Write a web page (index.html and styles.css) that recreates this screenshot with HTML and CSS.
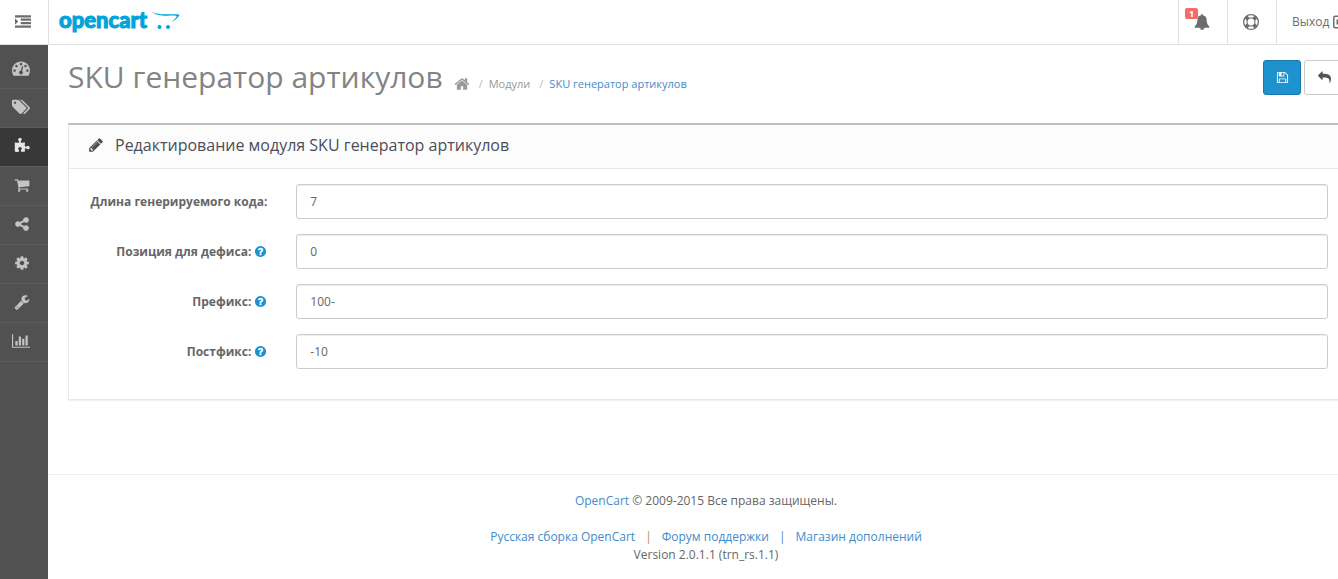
FILE: index.html
```html
<!DOCTYPE html>
<html lang="ru">
<head>
<meta charset="utf-8">
<title>SKU генератор артикулов</title>
<link rel="stylesheet" href="styles.css">
</head>
<body>
<svg class="sprite" aria-hidden="true">
  <symbol id="help" viewBox="0 0 1792 1792"><path d="M1024 1376v-192q0-14-9-23t-23-9h-192q-14 0-23 9t-9 23v192q0 14 9 23t23 9h192q14 0 23-9t9-23zm256-672q0-88-55.5-163t-138.5-116-170-41q-243 0-371 213-15 24 8 42l132 100q7 6 19 6 16 0 25-12 53-68 86-92 34-24 86-24 48 0 85.5 26t37.5 59q0 38-20 61t-68 45q-63 28-115.5 86.5t-52.5 125.5v36q0 14 9 23t23 9h192q14 0 23-9t9-23q0-19 21.5-49.5t54.5-49.5q32-18 49-28.5t46-35 44.5-48 28-60.5 12.5-81zm384 192q0 209-103 385.5t-279.5 279.5-385.5 103-385.5-103-279.5-279.5-103-385.5 103-385.5 279.5-279.5 385.5-103 385.5 103 279.5 279.5 103 385.5z"/></symbol>
</svg>
<div class="page">
  <header class="topbar">
    <button class="menu-toggle" type="button" aria-label="Меню"><svg class="icon icon-md" viewBox="0 0 1792 1792"><path d="M352 832q0 14-9 23l-288 288q-9 9-23 9-13 0-22.500-9.500t-9.500-22.500v-576q0-13 9.500-22.500t22.500-9.500q14 0 23 9l288 288q9 9 9 23zM32 1280h1728q32 0 32 32v192q0 32-32 32h-1728q-32 0-32-32v-192q0-32 32-32zM672 896h1088q32 0 32 32v192q0 32-32 32h-1088q-32 0-32-32v-192q0-32 32-32zM672 512h1088q32 0 32 32v192q0 32-32 32h-1088q-32 0-32-32v-192q0-32 32-32zM32 128h1728q32 0 32 32v192q0 32-32 32h-1728q-32 0-32-32v-192q0-32 32-32z"/></svg></button>
    <a class="logo" href="#"><span class="logo-text">opencart</span><svg class="logo-cart" viewBox="0 0 28 20"><path d="M0 1.500C3 4 8 4.200 14 4.200C20 4.200 25 4 27.500 4.600C27 7.500 23 10 19.500 12.500C22 9.500 24.500 7.500 24.800 6C21 5.200 16 6 10 5.400C5 5 1.500 4 0 1.500Z"/><circle cx="7.500" cy="17" r="2"/><circle cx="16" cy="17" r="2"/></svg></a>
    <nav class="top-links">
      <a class="top-link bell" href="#" aria-label="Уведомления"><span class="badge">1</span><svg class="icon icon-md" viewBox="0 0 1792 1792"><path d="M912 1696q0-16-16-16-59 0-101.500-42.500t-42.500-101.500q0-16-16-16t-16 16q0 73 51.500 124.500t124.500 51.500q16 0 16-16zm816-288q0 52-38 90t-90 38h-448q0 106-75 181t-181 75-181-75-75-181h-448q-52 0-90-38t-38-90q50-42 91-88t85-119.500 74.500-158.500 50-206 19.500-260q0-152 117-282.500t307-158.500q-8-19-8-39 0-40 28-68t68-28 68 28 28 68q0 20-8 39 190 28 307 158.500t117 282.500q0 139 19.500 260t50 206 74.500 158.500 85 119.500 91 88z"/></svg></a>
      <a class="top-link" href="#" aria-label="Помощь"><svg class="icon icon-md" viewBox="0 0 16 16"><path fill-rule="evenodd" d="M8 0a8 8 0 1 1 0 16A8 8 0 0 1 8 0ZM8 1.200a6.800 6.800 0 0 0-3.300.9L6.400 3.800a4.600 4.600 0 0 1 3.200 0l1.700-1.700A6.800 6.800 0 0 0 8 1.200ZM2.100 4.700a6.800 6.800 0 0 0 0 6.600l1.700-1.700a4.600 4.600 0 0 1 0-3.200ZM13.900 4.700l-1.700 1.700a4.600 4.600 0 0 1 0 3.200l1.700 1.700a6.800 6.800 0 0 0 0-6.600ZM4.700 13.900a6.800 6.800 0 0 0 6.600 0l-1.700-1.700a4.600 4.600 0 0 1-3.200 0ZM8 4.600a3.400 3.400 0 1 0 0 6.800 3.400 3.400 0 0 0 0-6.800Z"/></svg></a>
      <a class="top-link logout" href="#">Выход <svg class="icon icon-md" viewBox="0 0 16 16"><path d="M6 1.500H3.500A2.500 2.500 0 0 0 1 4v8a2.500 2.500 0 0 0 2.500 2.500H6V13H3.500a1 1 0 0 1-1-1V4a1 1 0 0 1 1-1H6ZM4.500 5.500H9v-3L15 8l-6 5.500v-3H4.500Z"/></svg></a>
    </nav>
  </header>
  <div class="layout">
    <nav class="sidebar" aria-label="Разделы">
      <a class="side-link" href="#" aria-label="Панель"><svg class="icon icon-lg" viewBox="0 0 1792 1792"><path d="M384 1152q0-53-37.500-90.500t-90.500-37.500-90.500 37.500-37.500 90.500 37.500 90.500 90.500 37.500 90.500-37.500 37.500-90.500zm192-448q0-53-37.500-90.500t-90.500-37.500-90.500 37.500-37.500 90.500 37.500 90.500 90.500 37.500 90.500-37.500 37.500-90.500zm428 481l101-382q6-26-7.500-48.500t-38.500-29.500-48 6.500-30 39.500l-101 382q-60 5-107 43.500t-63 98.500q-20 77 20 146t117 89 146-20 89-117q16-60-6-117t-72-91zm660-33q0-53-37.500-90.500t-90.500-37.500-90.500 37.500-37.500 90.500 37.500 90.500 90.500 37.500 90.500-37.500 37.500-90.500zm-640-640q0-53-37.500-90.500t-90.500-37.500-90.500 37.500-37.500 90.500 37.500 90.500 90.500 37.500 90.500-37.500 37.500-90.500zm448 192q0-53-37.500-90.500t-90.500-37.500-90.500 37.500-37.500 90.500 37.500 90.500 90.500 37.500 90.500-37.500 37.500-90.500zm320 448q0 261-141 483-19 29-54 29h-1402q-35 0-54-29-141-221-141-483 0-182 71-348t191-286 286-191 348-71 348 71 286 191 191 286 71 348z"/></svg></a>
      <a class="side-link" href="#" aria-label="Каталог"><svg class="icon icon-lg" viewBox="0 0 1900 1792"><path d="M448 448q0-53-37.500-90.500t-90.500-37.500-90.500 37.500-37.500 90.500 37.500 90.500 90.500 37.500 90.500-37.500 37.500-90.500zm1067 576q0 53-37 90l-491 492q-39 37-91 37-53 0-90-37l-715-716q-38-37-64.500-101t-26.500-117v-416q0-52 38-90t90-38h416q53 0 117 26.500t102 64.500l715 714q37 39 37 91zm384 0q0 53-37 90l-491 492q-39 37-91 37-36 0-59-14t-53-45l470-470q37-37 37-90 0-52-37-91l-715-714q-38-38-102-64.500t-117-26.500h224q53 0 117 26.500t102 64.500l715 714q37 39 37 91z"/></svg></a>
      <a class="side-link active" href="#" aria-label="Дополнения"><svg class="icon icon-md" viewBox="0 0 1792 1792"><path d="M1755 1083q0 81-44.500 135t-123.500 54q-41 0-77.500-17.500t-59-38-56.500-38-71-17.500q-110 0-110 124 0 39 16 115t15 115v5q-22 0-33 1-34 3-97.500 11.500t-115.500 13.500-98 5q-61 0-103-26.500t-42-83.500q0-37 17.500-71t38-56.500 38-59 17.500-77.500q0-79-54-123.500t-135-44.500q-84 0-143 45.500t-59 127.500q0 43 15 83t33.500 64.500 33.500 53 15 50.500q0 45-46 89-37 35-117 35-95 0-245-24-9-2-27.500-4t-27.500-4l-13-2q-1 0-3-1-2 0-2-1v-1024q2 1 17.500 3.500t34 5 21.500 3.500q150 24 245 24 80 0 117-35 46-44 46-89 0-22-15-50.500t-33.500-53-33.500-64.500-15-83q0-82 59-127.500t144-45.500q80 0 134 44.500t54 123.500q0 41-17.500 77.500t-38 59-38 56.500-17.500 71q0 57 42 83.500t103 26.500q64 0 180-15t163-17v2q-1 2-3.500 17.500t-5 34-3.500 21.500q-24 150-24 245 0 80 35 117 44 46 89 46 22 0 50.500-15t53-33.500 64.500-33.500 83-15q82 0 127.500 59t45.500 143z"/></svg></a>
      <a class="side-link" href="#" aria-label="Продажи"><svg class="icon icon-md" viewBox="0 0 1792 1792"><path d="M704 1536q0 52-38 90t-90 38-90-38-38-90 38-90 90-38 90 38 38 90zm896 0q0 52-38 90t-90 38-90-38-38-90 38-90 90-38 90 38 38 90zm128-1088v512q0 24-16.500 42.500t-40.500 21.500l-1044 122q13 60 13 70 0 16-24 64h920q26 0 45 19t19 45-19 45-45 19h-1024q-26 0-45-19t-19-45q0-11 8-31.500t16-36 21.500-40 15.500-29.500l-177-823h-204q-26 0-45-19t-19-45 19-45 45-19h256q16 0 28.500 6.500t19.500 15.500 13 24.500 8 26 5.500 29.500 4.500 26h1201q26 0 45 19t19 45z"/></svg></a>
      <a class="side-link" href="#" aria-label="Маркетинг"><svg class="icon icon-md" viewBox="0 0 1792 1792"><path d="M1344 1024q133 0 226.500 93.500t93.500 226.500-93.500 226.500-226.500 93.500-226.500-93.500-93.500-226.500q0-12 2-34l-360-180q-92 86-218 86-133 0-226.500-93.500t-93.500-226.500 93.500-226.500 226.500-93.500q126 0 218 86l360-180q-2-22-2-34 0-133 93.500-226.500t226.500-93.500 226.500 93.500 93.500 226.500-93.500 226.500-226.500 93.500q-126 0-218-86l-360 180q2 22 2 34t-2 34l360 180q92-86 218-86z"/></svg></a>
      <a class="side-link" href="#" aria-label="Система"><svg class="icon icon-md" viewBox="0 0 1792 1792"><path d="M1152 896q0-106-75-181t-181-75-181 75-75 181 75 181 181 75 181-75 75-181zm512-109v222q0 12-8 23t-20 13l-185 28q-19 54-39 91 35 50 107 138 10 12 10 25t-9 23q-27 37-99 108t-94 71q-12 0-26-9l-138-108q-44 23-91 38-16 136-29 186-7 28-36 28h-222q-14 0-24.500-8.500t-11.500-21.500l-28-184q-49-16-90-37l-141 107q-10 9-25 9-14 0-25-11-126-114-165-168-7-10-7-23 0-12 8-23 15-21 51-66.500t54-70.500q-27-50-41-99l-183-27q-13-2-21-12.500t-8-23.500v-222q0-12 8-23t19-13l186-28q14-46 39-92-40-57-107-138-10-12-10-24 0-10 9-23 26-36 98.500-107.500t94.500-71.500q13 0 26 10l138 107q44-23 91-38 16-136 29-186 7-28 36-28h222q14 0 24.500 8.500t11.500 21.500l28 184q49 16 90 37l142-107q9-9 24-9 13 0 25 10 129 119 165 170 7 8 7 22 0 12-8 23-15 21-51 66.500t-54 70.500q26 50 41 98l183 28q13 2 21 12.500t8 23.500z"/></svg></a>
      <a class="side-link" href="#" aria-label="Инструменты"><svg class="icon icon-md" viewBox="0 0 1792 1792"><path d="M448 1472q0-26-19-45t-45-19-45 19-19 45 19 45 45 19 45-19 19-45zm644-420l-682 682q-37 37-90 37-52 0-91-37l-106-108q-38-36-38-90 0-53 38-91l681-681q39 98 114.500 173.500t173.500 114.500zm634-435q0 39-23 106-47 134-164.500 217.500t-258.500 83.500q-185 0-316.500-131.500t-131.500-316.500 131.500-316.500 316.500-131.500q58 0 121.500 16.500t107.500 46.500q16 11 16 28t-16 28l-293 169v224l193 107q5-3 79-48.500t135.500-81 70.500-35.500q15 0 23.500 10t8.500 25z"/></svg></a>
      <a class="side-link" href="#" aria-label="Отчёты"><svg class="icon icon-lg" viewBox="0 0 2048 1792"><path d="M640 896v512h-256v-512h256zm384-512v1024h-256v-1024h256zm1024 1152v128h-2048v-1536h128v1408h1920zm-640-896v768h-256v-768h256zm384-384v1152h-256v-1152h256z"/></svg></a>
    </nav>
    <div class="main">
      <main class="content">
        <div class="page-header">
          <h1>SKU генератор артикулов</h1>
          <ol class="breadcrumb">
            <li><a href="#" aria-label="Главная"><svg class="icon icon-md" viewBox="0 0 1792 1792"><path d="M1472 992v480q0 26-19 45t-45 19h-384v-384h-256v384h-384q-26 0-45-19t-19-45v-480q0-1 .5-3t.5-3l575-474 575 474q1 2 1 6zm223-69l-62 74q-8 9-21 11h-3q-13 0-21-7l-692-577-692 577q-12 8-24 7-13-2-21-11l-62-74q-8-10-7-23.500t11-21.500l719-599q32-26 76-26t76 26l244 204v-195q0-14 9-23t23-9h192q14 0 23 9t9 23v408l219 182q10 8 11 21.500t-7 23.500z"/></svg></a></li>
            <li><a href="#">Модули</a></li>
            <li><a class="current" href="#">SKU генератор артикулов</a></li>
          </ol>
          <div class="actions">
            <button class="btn btn-primary" type="submit" form="sku-form" aria-label="Сохранить"><svg class="icon icon-sm" viewBox="0 0 1792 1792"><path d="M512 1536h768v-384h-768v384zm896 0h128v-896q0-14-10-38.500t-20-34.500l-281-281q-10-10-34-20t-39-10v416q0 40-28 68t-68 28h-576q-40 0-68-28t-28-68v-416h-128v1280h128v-416q0-40 28-68t68-28h832q40 0 68 28t28 68v416zm-384-928v-320q0-13-9.500-22.500t-22.500-9.500h-192q-13 0-22.500 9.500t-9.500 22.500v320q0 13 9.500 22.500t22.500 9.500h192q13 0 22.500-9.500t9.500-22.500zm640 32v928q0 40-28 68t-68 28h-1344q-40 0-68-28t-28-68v-1344q0-40 28-68t68-28h928q40 0 88 20t76 48l280 280q28 28 48 76t20 88z"/></svg></button>
            <button class="btn" type="button" aria-label="Назад"><svg class="icon icon-sm" viewBox="0 0 1792 1792"><path transform="matrix(-1 0 0 1 1792 0)" d="M1792 640q0 26-19 45l-512 512q-19 19-45 19t-45-19-19-45v-256h-224q-98 0-175.500 6t-154 21.500-133 42.500-105.500 69.500-80 101-48.500 138.500-17.500 181q0 55 5 123 0 6 2.500 23.500t2.500 26.500q0 15-8.500 25t-23.500 10q-16 0-28-17-7-9-13-22t-13.500-30-10.500-24q-127-285-127-451 0-199 53-333 162-403 875-403h224v-256q0-26 19-45t45-19 45 19l512 512q19 19 19 45z"/></svg></button>
          </div>
        </div>
        <section class="panel">
          <div class="panel-heading">
            <svg class="icon icon-md" viewBox="0 0 1792 1792"><path d="M491 1536l91-91-235-235-91 91v107h128v128h107zm523-928q0-22-22-22-10 0-17 7l-542 542q-7 7-7 17 0 22 22 22 10 0 17-7l542-542q7-7 7-17zm-54-192l416 416-832 832h-416v-416zm683 96q0 53-37 90l-166 166-416-416 166-165q36-38 90-38 53 0 91 38l235 234q37 39 37 91z"/></svg>
            <h2>Редактирование модуля SKU генератор артикулов</h2>
          </div>
          <form class="panel-body" id="sku-form">
            <div class="form-row"><label for="length">Длина генерируемого кода:</label><input id="length" type="text" value="7"></div>
            <div class="form-row"><label for="dash">Позиция для дефиса: <svg class="icon icon-sm help"><use href="#help"/></svg></label><input id="dash" type="text" value="0"></div>
            <div class="form-row"><label for="prefix">Префикс: <svg class="icon icon-sm help"><use href="#help"/></svg></label><input id="prefix" type="text" value="100-"></div>
            <div class="form-row"><label for="postfix">Постфикс: <svg class="icon icon-sm help"><use href="#help"/></svg></label><input id="postfix" type="text" value="-10"></div>
          </form>
        </section>
      </main>
      <footer class="footer">
        <p><a href="#">OpenCart</a> © 2009-2015 Все права защищены.</p>
        <p class="footer-links"><a href="#">Русская сборка OpenCart</a><span>|</span><a href="#">Форум поддержки</a><span class="blue">|</span><a href="#">Магазин дополнений</a></p>
        <p>Version 2.0.1.1 (trn_rs.1.1)</p>
      </footer>
    </div>
  </div>
</div>
</body>
</html>
```
FILE: styles.css
```css
* { box-sizing: border-box; }

body {
  margin: 0;
  overflow: hidden;
  background: #fff;
  color: #666;
  font: 12px/18px "Open Sans", "Noto Sans", sans-serif;
}

a { color: #428bca; text-decoration: none; }
h1, h2, p, ol { margin: 0; padding: 0; font-weight: 400; }

.sprite { display: none; }
.icon { display: block; flex: none; fill: currentColor; }
.icon-sm { width: 13px; height: 13px; }
.icon-md { width: 16px; height: 16px; }
.icon-lg { width: 18px; height: 18px; }

/* The page is a little wider than the window and is clipped on the right. */
.page {
  display: flex;
  flex-direction: column;
  width: calc(100% + 26px);
  min-height: 100vh;
}

.topbar {
  display: flex;
  height: 45px;
  border-bottom: 1px solid #e1e1e1;
}

.menu-toggle {
  display: flex;
  align-items: center;
  justify-content: center;
  width: 49px;
  padding: 0 2px 0 0;
  border: 0;
  border-right: 1px solid #e1e1e1;
  background: #fff;
  color: #6d6d6d;
}

.logo {
  display: flex;
  gap: 5px;
  padding: 8px 10px;
  color: #00a3db;
}

.logo-text {
  font: 900 22px/24px Lato, "Open Sans", sans-serif;
  -webkit-text-stroke: 1px #00a3db;
}

.logo-cart { width: 28px; height: 20px; margin-top: 2px; fill: currentColor; }

.top-links { display: flex; margin-left: auto; }

.top-link {
  position: relative;
  display: flex;
  align-items: center;
  gap: 3px;
  padding: 0 17px 0 15px;
  border-left: 1px solid #e1e1e1;
  color: #6d6d6d;
}

.logout { width: 88px; }

.badge {
  position: absolute;
  top: 8px;
  left: 6px;
  padding: 0 4px;
  border-radius: 2px;
  background: #f56b6b;
  color: #fff;
  font-size: 9px;
  font-weight: 700;
  line-height: 11px;
}

.layout { display: flex; flex: 1; }

.sidebar { width: 48px; flex: none; background: #515151; }

.side-link {
  display: flex;
  align-items: center;
  height: 39px;
  padding: 0 0 2px 14px;
  border-bottom: 1px solid #5c5c5c;
  color: #c4c4c4;
}

.side-link:first-child { height: 44px; padding-top: 5px; }
.side-link .icon-lg { margin-left: -2px; }
.side-link.active { background: #383838; color: #e6e6e6; }

.main { display: flex; flex: 1; flex-direction: column; min-width: 0; }
.content { padding: 15px 20px 74px; }

.page-header { display: flex; margin-bottom: 28px; }

h1 {
  color: #848484;
  font-size: 30px;
  line-height: 34px;
}

.breadcrumb {
  display: flex;
  align-items: center;
  height: 18px;
  margin: 15px 0 0 11px;
  list-style: none;
  font-size: 11px;
}

.breadcrumb li { display: flex; align-items: center; }
.breadcrumb li + li::before { content: "/"; padding: 0 6px 0 9px; color: #bbb; }
.breadcrumb a { color: #999; }
.breadcrumb a.current { color: #428bca; }

.actions { display: flex; gap: 3px; margin-left: auto; }

.btn {
  display: flex;
  align-items: center;
  justify-content: center;
  width: 40px;
  height: 35px;
  padding: 0;
  border: 1px solid #ccc;
  border-radius: 3px;
  background: #fff;
  color: #555;
}

.btn-primary { width: 38px; border-color: #1978ab; background: #1e91cf; color: #fff; }

.panel {
  border: 1px solid #e8e8e8;
  border-top: 2px solid #bfbfbf;
  box-shadow: 0 1px 1px rgba(0, 0, 0, 0.05);
}

.panel-heading {
  display: flex;
  align-items: center;
  gap: 11px;
  height: 44px;
  padding: 0 0 4px 19px;
  border-bottom: 1px solid #e8e8e8;
  background: #fcfcfc;
  color: #4c4d5a;
}

h2 { color: #4c4d5a; font-size: 16px; line-height: 20px; }

.panel-body {
  display: flex;
  flex-direction: column;
  gap: 15px;
  padding: 15px 0 30px;
}

.form-row {
  display: grid;
  grid-template-columns: 1fr 5fr;
  align-items: center;
}

.form-row label {
  display: flex;
  align-items: center;
  justify-content: flex-end;
  gap: 3px;
  padding-right: 14px;
  font-weight: 700;
  white-space: nowrap;
}

.help { color: #1e91cf; }

.form-row input {
  height: 35px;
  margin: 0 15px;
  padding: 8px 13px;
  border: 1px solid #ccc;
  border-radius: 3px;
  background: #fff;
  box-shadow: inset 0 1px 1px rgba(0, 0, 0, 0.075);
  color: #666;
  font: inherit;
}

.footer {
  padding: 17px 0 0;
  border-top: 1px solid #eee;
  text-align: center;
}

.footer-links { margin-top: 18px; }
.footer-links span { margin: 0 10px; color: #b78a50; }
.footer-links .blue { color: #428bca; }
```
